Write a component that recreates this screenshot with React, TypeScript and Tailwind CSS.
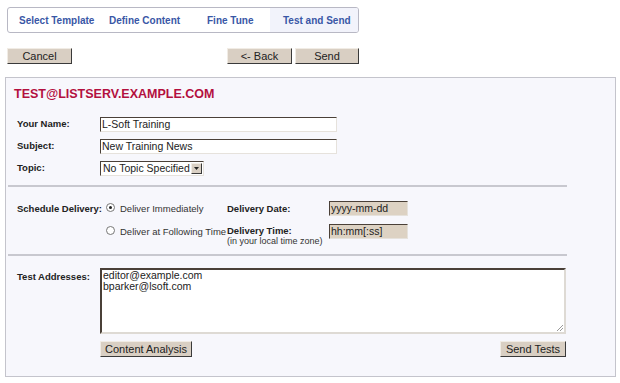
import React from 'react'

const font = { fontFamily: '"Liberation Sans", Arial, sans-serif' }

function Btn({ children, className = '' }: { children: React.ReactNode; className?: string }) {
  return (
    <button
      className={`h-[16px] bg-[#d9cfc3] border border-t-[#f1ece5] border-l-[#f1ece5] border-r-[#3a3a3a] border-b-[#3a3a3a] text-[11px] leading-none text-[#222] whitespace-nowrap ${className}`}
    >
      {children}
    </button>
  )
}

function Field({ value, className = '' }: { value: string; className?: string }) {
  return (
    <div
      className={`h-[15px] bg-white border border-t-[#4a4038] border-l-[#4a4038] border-r-[#e6e2dc] border-b-[#e6e2dc] px-[1px] text-[10.5px] leading-[13px] text-[#222] whitespace-nowrap ${className}`}
    >
      {value}
    </div>
  )
}

export default function App() {
  return (
    <div className="w-[620px] h-[383px] bg-white relative whitespace-nowrap" style={font}>
      {/* Wizard steps */}
      <div className="ml-[7px] pt-[7px]">
        <div className="w-[352px] h-[26px] border border-[#b8b8c4] rounded-[3px] flex items-stretch text-[10px] font-bold text-[#3957a6] overflow-hidden">
          <div className="w-[97px] flex items-center pl-[11px]">Select Template</div>
          <div className="w-[97px] flex items-center pl-[4px]">Define Content</div>
          <div className="w-[68px] flex items-center pl-[5px]">Fine Tune</div>
          <div className="flex-1 flex items-center pl-[13px] bg-[#f2f3fb]">Test and Send</div>
        </div>
      </div>

      {/* Actions */}
      <div className="flex mt-[15px] ml-[7px] w-[352px]">
        <Btn className="w-[65px]">Cancel</Btn>
        <div className="flex-1" />
        <Btn className="w-[65px]">&lt;- Back</Btn>
        <Btn className="w-[64px] ml-[3px]">Send</Btn>
      </div>

      {/* Main panel */}
      <div className="mt-[13px] ml-[5px] w-[611px] h-[300px] bg-[#f7f7fc] border border-[#c4c4cc] pt-[8px]">
        <div className="pl-[8px] text-[12.5px] font-bold text-[#b3103f] leading-[16px]">TEST@LISTSERV.EXAMPLE.COM</div>

        <div className="pl-[11px] mt-[15px] flex flex-col gap-[7px] text-[9.5px] font-bold text-[#222]">
          <div className="flex items-center h-[15px]">
            <span className="w-[83px]">Your Name:</span>
            <Field value="L-Soft Training" className="w-[237px] font-normal" />
          </div>
          <div className="flex items-center h-[15px]">
            <span className="w-[83px]">Subject:</span>
            <Field value="New Training News" className="w-[237px] font-normal" />
          </div>
          <div className="flex items-center h-[15px]">
            <span className="w-[83px]">Topic:</span>
            <div className="w-[104px] h-[15px] bg-white border border-t-[#4a4038] border-l-[#4a4038] border-r-[#e6e2dc] border-b-[#e6e2dc] flex items-center font-normal text-[10.5px]">
              <span className="flex-1 pl-[2px] leading-none">No Topic Specified</span>
              <span className="w-[11px] h-[11px] mr-[1px] bg-[#d9cfc3] border border-t-[#f1ece5] border-l-[#f1ece5] border-r-[#3a3a3a] border-b-[#3a3a3a] flex items-center justify-center">
                <svg width="5" height="3" viewBox="0 0 5 3"><path d="M0 0h5L2.5 3z" fill="#222" /></svg>
              </span>
            </div>
          </div>
        </div>

        <div className="ml-[2px] mt-[9px] w-[559px] h-[2px] bg-[#c8c8cf]" />

        <div className="pl-[11px] mt-[14px] flex text-[9.5px] text-[#333]">
          <span className="w-[83px] font-bold text-[#222] pt-[1px]">Schedule Delivery:</span>
          <div className="flex flex-col gap-[8px]">
            <div className="flex items-start h-[15px]">
              <span className="w-[9px] h-[9px] mt-[2px] ml-[6px] rounded-full border border-[#777] bg-white flex items-center justify-center">
                <span className="w-[3px] h-[3px] rounded-full bg-[#222]" />
              </span>
              <span className="ml-[5px] w-[107px] mt-[1px]">Deliver Immediately</span>
              <span className="w-[102px] font-bold text-[#222] mt-[1px]">Delivery Date:</span>
              <Field value="yyyy-mm-dd" className="w-[79px] !bg-[#ddd2c3]" />
            </div>
            <div className="flex items-start h-[24px]">
              <span className="w-[9px] h-[9px] mt-[2px] ml-[6px] rounded-full border border-[#777] bg-white" />
              <span className="ml-[5px] w-[107px] mt-[1px]">Deliver at Following Time</span>
              <span className="w-[102px] flex flex-col mt-[1px] leading-[11px]">
                <span className="font-bold text-[#222]">Delivery Time:</span>
                <span className="text-[9px]">(in your local time zone)</span>
              </span>
              <Field value="hh:mm[:ss]" className="w-[79px] !bg-[#ddd2c3]" />
            </div>
          </div>
        </div>

        <div className="ml-[2px] mt-[6px] w-[559px] h-[2px] bg-[#c8c8cf]" />

        <div className="pl-[11px] mt-[12px] flex text-[9.5px]">
          <span className="w-[83px] font-bold text-[#222] pt-[2px]">Test Addresses:</span>
          <div className="flex flex-col w-[466px]">
            <div className="h-[66px] bg-white border-2 border-t-[#4a4038] border-l-[#4a4038] border-r-[#dedad4] border-b-[#dedad4] px-[1px] text-[10.5px] leading-[11px] text-[#222] relative">
              <div>editor@example.com</div>
              <div>bparker@lsoft.com</div>
              <svg className="absolute right-[1px] bottom-[1px]" width="7" height="7" viewBox="0 0 7 7">
                <path d="M7 1L1 7M7 4L4 7" stroke="#999" strokeWidth="1" />
              </svg>
            </div>
            <div className="flex justify-between mt-[7px]">
              <Btn className="w-[92px]">Content Analysis</Btn>
              <Btn className="w-[66px]">Send Tests</Btn>
            </div>
          </div>
        </div>
      </div>
    </div>
  )
}
